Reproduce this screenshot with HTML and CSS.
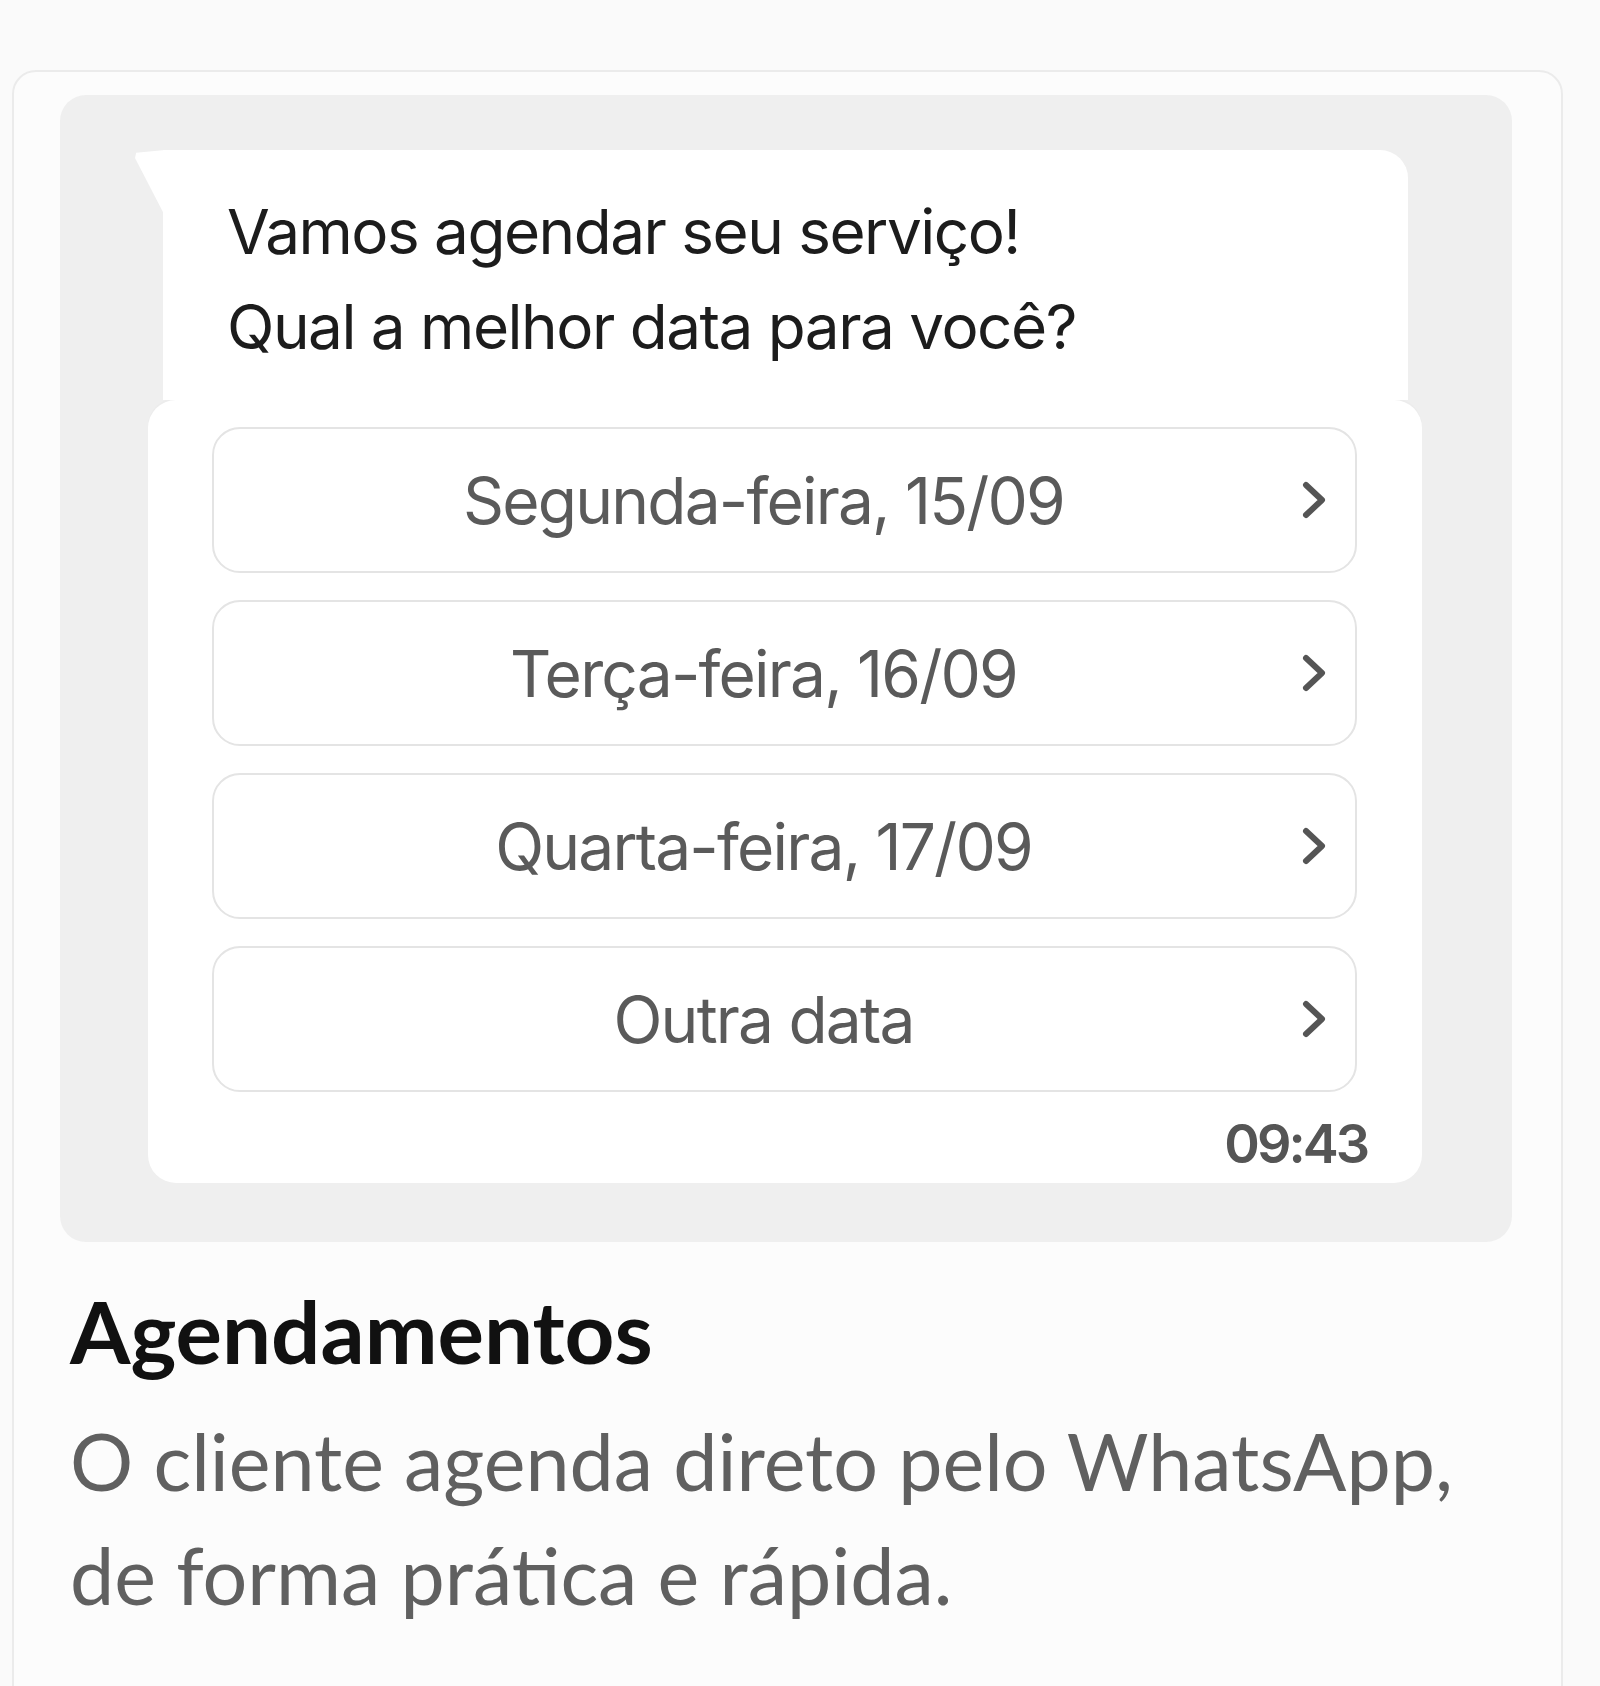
FILE: index.html
```html
<!doctype html>
<html lang="pt-BR">
  <head>
    <meta charset="UTF-8" />
    <title>Agendamentos</title>
    <link rel="stylesheet" href="styles.css">
  </head>
  <body>
    <div class="feature-card">
      <div class="chat">
        <div class="bubble">
          <p>Vamos agendar seu serviço!</p>
          <p>Qual a melhor data para você?</p>
        </div>
        <div class="options">
          <button class="option">
            <span class="label">Segunda-feira, 15/09</span>
            <svg class="chevron" viewBox="0 0 26 40"><path d="M5 5 L21 20 L5 35" /></svg>
          </button>
          <button class="option">
            <span class="label">Terça-feira, 16/09</span>
            <svg class="chevron" viewBox="0 0 26 40"><path d="M5 5 L21 20 L5 35" /></svg>
          </button>
          <button class="option">
            <span class="label">Quarta-feira, 17/09</span>
            <svg class="chevron" viewBox="0 0 26 40"><path d="M5 5 L21 20 L5 35" /></svg>
          </button>
          <button class="option">
            <span class="label">Outra data</span>
            <svg class="chevron" viewBox="0 0 26 40"><path d="M5 5 L21 20 L5 35" /></svg>
          </button>
          <div class="time">09:43</div>
        </div>
      </div>
      <div class="info">
        <h2>Agendamentos</h2>
        <p>O cliente agenda direto pelo WhatsApp,<br>de forma prática e rápida.</p>
      </div>
    </div>
  </body>
</html>
```

FILE: styles.css
```css
body {
  margin: 0;
  background: #fafafa;
  padding: 70px 0 0 12px;
}
.feature-card {
  width: 1551px;
  box-sizing: border-box;
  background: #fcfcfc;
  border: 2px solid #ebebeb;
  border-radius: 24px;
  padding: 23px 49px 120px 46px;
}
.chat {
  background: #efefef;
  border-radius: 26px;
  padding: 55px 90px 59px 88px;
}
.bubble {
  position: relative;
  background: #fff;
  margin: 0 14px 0 15px;
  border-radius: 0 28px 0 0;
  padding: 34px 52px 26px 64px;
  font-family: Inter, "Liberation Sans", sans-serif;
  font-size: 62px;
  line-height: 95px;
  letter-spacing: -1.5px;
  color: #1c1c1c;
}
.bubble::before {
  content: "";
  position: absolute;
  left: -28px;
  top: 0;
  width: 30px;
  height: 66px;
  background: #fff;
  clip-path: polygon(0 12%, 4% 4%, 100% 0, 100% 100%);
}
.bubble p {
  margin: 0;
}
.options {
  background: #fff;
  border-radius: 28px;
  box-shadow: 0 -2px 0 #ececec;
  padding: 27px 55px 10px 64px;
  display: flex;
  flex-direction: column;
  gap: 27px;
}
.option {
  display: flex;
  align-items: center;
  height: 146px;
  margin-right: 10px;
  padding: 0 0 0 12px;
  background: #fff;
  border: 2px solid #e4e4e4;
  border-radius: 28px;
  font-family: Inter, "Liberation Sans", sans-serif;
  font-size: 64px;
  letter-spacing: -1.8px;
  color: #5a5a5a;
}
.label {
  flex: 1;
  text-align: center;
}
.chevron {
  width: 26px;
  height: 40px;
  margin-right: 28px;
  fill: none;
  stroke: #555;
  stroke-width: 6;
  stroke-linecap: round;
  stroke-linejoin: round;
}
.time {
  margin-top: -4px;
  text-align: right;
  font-family: Inter, "Liberation Sans", sans-serif;
  font-size: 54px;
  line-height: 58px;
  font-weight: 600;
  letter-spacing: -3px;
  color: #555;
}
.info {
  padding: 37px 0 0 10px;
  font-family: Lato, "Liberation Sans", sans-serif;
}
.info h2 {
  margin: 0;
  font-size: 87px;
  line-height: 1.2;
  font-weight: 700;
  color: #111;
}
.info p {
  margin: 21px 0 0;
  font-size: 79px;
  line-height: 114px;
  color: #606060;
}
```
